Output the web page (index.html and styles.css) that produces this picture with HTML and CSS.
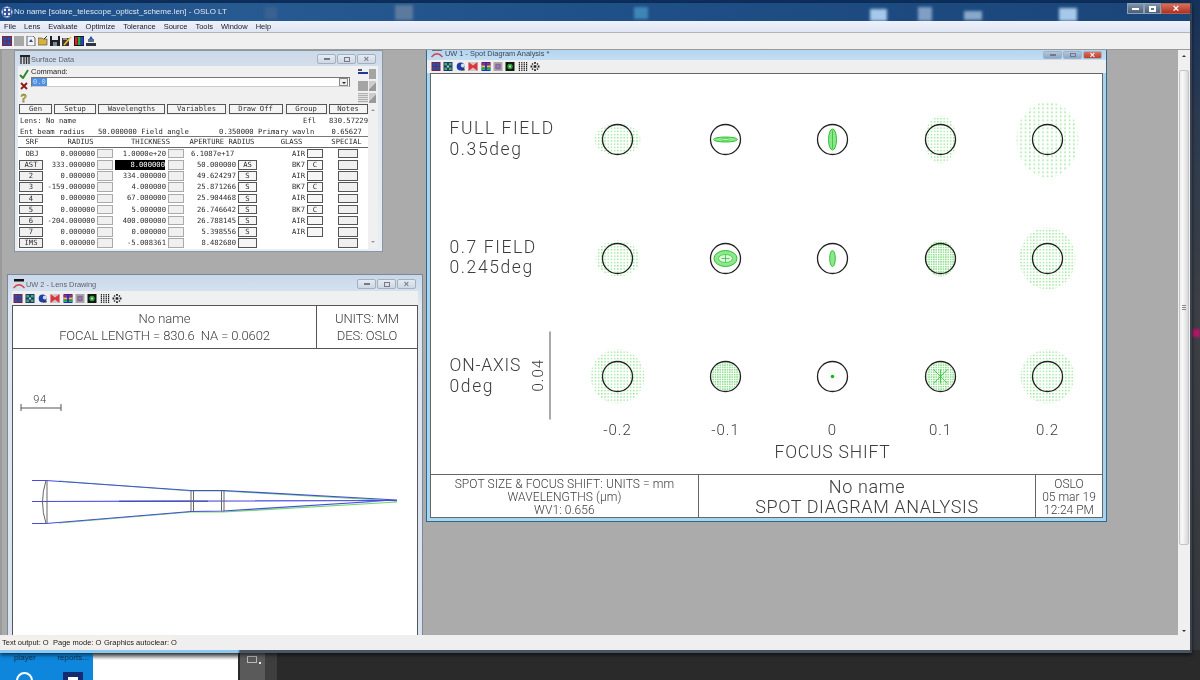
FILE: index.html
```html
<!DOCTYPE html>
<html lang="en">
<head>
<meta charset="utf-8">
<title>OSLO LT</title>
<link rel="stylesheet" href="styles.css">
</head>
<body>
<svg class="sheet" aria-hidden="true">
  <defs>
    <pattern id="dotsA" width="3.2" height="3.2" patternUnits="userSpaceOnUse"><rect width="1.4" height="1.4" fill="#98e898"/></pattern>
    <pattern id="dotsD" width="4.4" height="4" patternUnits="userSpaceOnUse"><rect width="1.6" height="1.6" fill="#a0e8a0"/></pattern>
    <pattern id="dotsB" width="2.4" height="2.4" patternUnits="userSpaceOnUse"><rect width="1.5" height="1.5" fill="#88e088"/></pattern>
    <symbol id="i1" viewBox="0 0 10 10"><rect width="10" height="10" fill="#8c1c34"/><rect x="1" y="1" width="3.6" height="3.6" fill="#2050b0"/><rect x="5.4" y="1" width="3.6" height="3.6" fill="#2050b0"/><rect x="1" y="5.4" width="3.6" height="3.6" fill="#2050b0"/><rect x="5.4" y="5.4" width="3.6" height="3.6" fill="#2050b0"/></symbol>
    <symbol id="i2" viewBox="0 0 10 10"><rect width="10" height="10" fill="#203870"/><path d="M1 1h3v3H1zM6 1h3v3H6zM1 6h3v3H1zM6 6h3v3H6z" fill="#40b060"/><rect x="4" y="4" width="2" height="2" fill="#e0e0e0"/></symbol>
    <symbol id="i3" viewBox="0 0 10 10"><circle cx="4.6" cy="5" r="4.4" fill="#1c3fa8"/><circle cx="7" cy="4" r="2.2" fill="#d8dce8"/><path d="M5 8.5l4-1v2H5z" fill="#333"/></symbol>
    <symbol id="i4" viewBox="0 0 10 10"><rect width="10" height="10" fill="#c8c8cc"/><path d="M0 0l5 4 5-4v10L5 6l-5 4z" fill="#e0343c"/></symbol>
    <symbol id="i5" viewBox="0 0 10 10"><rect width="10" height="10" fill="#2030d0"/><path d="M0 1h4v2H0zM6 1h4v2H6z" fill="#e02020"/><path d="M0 4h4v2H0zM6 4h4v2H6z" fill="#e8d020"/><path d="M0 7h4v2H0zM6 7h4v2H6z" fill="#20c040"/></symbol>
    <symbol id="i6" viewBox="0 0 10 10"><rect width="10" height="10" fill="#a8a8a8"/><rect x="2" y="2" width="6" height="6" fill="#a05c90"/><rect x="3.5" y="3.5" width="3" height="3" fill="#6890c0"/></symbol>
    <symbol id="i7" viewBox="0 0 10 10"><rect width="10" height="10" fill="#101810"/><circle cx="5" cy="5" r="3" fill="#30a040"/><circle cx="5" cy="5" r="1.2" fill="#c0f0a0"/></symbol>
    <symbol id="i8" viewBox="0 0 10 10"><path d="M1 0v10M3.7 0v10M6.4 0v10M9 0v10" stroke="#222" stroke-width="1.3" stroke-dasharray="1.6 .5" fill="none"/></symbol>
    <symbol id="i9" viewBox="0 0 10 10"><path d="M4 0h2v2H4zM0 4h2v2H0zM8 4h2v2H8zM4 8h2v2H4zM1.500 1.500h1.500v1.500h-1.500zM7 1.500h1.500v1.500H7zM1.500 7h1.500v1.500h-1.500zM7 7h1.500v1.500H7zM3.500 3.500h3v3h-3z" fill="#222"/></symbol>
    <symbol id="lensico" viewBox="0 0 12 10"><rect x="1" y="0" width="10" height="2.500" fill="#111"/><path d="M.5 9Q6 2.500 11.500 9" stroke="#d84040" stroke-width="1.300" fill="none"/></symbol>
  </defs>
</svg>

<div class="top-strip"></div>
<div class="side-strip"><span class="side-mark"></span></div>

<div class="desktop">
  <div class="shortcuts">
    <div class="short-labels"><span>player</span><span>reports...</span></div>
    <div class="short-icons"><span class="round-ico"></span><span class="square-ico"></span></div>
  </div>
  <div class="blank"></div>
  <div class="darkapp">
    <div class="panel-a"><span class="panel-ico"></span><span class="panel-dot"></span></div>
    <div class="panel-b"></div>
  </div>
</div>

<main class="app">
  <header class="titlebar">
    <svg class="app-ico" viewBox="0 0 12 12"><circle cx="6" cy="6" r="5.500" fill="#e8eef8"/><circle cx="4" cy="4" r="2" fill="none" stroke="#1c3c90" stroke-width="1.200"/><circle cx="8" cy="4" r="2" fill="none" stroke="#1c3c90" stroke-width="1.200"/><circle cx="4" cy="8" r="2" fill="none" stroke="#1c3c90" stroke-width="1.200"/><circle cx="8" cy="8" r="2" fill="none" stroke="#1c3c90" stroke-width="1.200"/></svg>
    <span class="app-title">No name [solare_telescope_opticst_scheme.len] - OSLO LT</span>
    <div class="app-btns">
      <span class="abtn"><i class="glyph-min"></i></span>
      <span class="abtn"><i class="glyph-max"></i></span>
      <span class="abtn close"><i class="glyph-x">×</i></span>
    </div>
  </header>
  <nav class="menubar"><span>File</span><span>Lens</span><span>Evaluate</span><span>Optimize</span><span>Tolerance</span><span>Source</span><span>Tools</span><span>Window</span><span>Help</span></nav>
  <div class="toolbar">
    <svg class="tico"><use href="#i1"/></svg>
    <span class="tico grey"></span>
    <svg class="tico" viewBox="0 0 10 10"><path d="M1 0h6l2 2v8H1z" fill="#f4f4f4" stroke="#445" stroke-width=".8"/><path d="M3 6l2-3 2 3z" fill="#2050b0"/></svg>
    <svg class="tico" viewBox="0 0 10 10"><path d="M0 2h4l1 1h4v6H0z" fill="#d8b040" stroke="#554" stroke-width=".7"/><path d="M6 3l3-3" stroke="#333"/></svg>
    <svg class="tico" viewBox="0 0 10 10"><rect width="10" height="10" fill="#1c2028"/><rect x="2" y="0" width="6" height="4" fill="#e8e8e8"/><rect x="3" y="6" width="4" height="4" fill="#808890"/></svg>
    <svg class="tico" viewBox="0 0 10 10"><rect y="2" width="7" height="8" fill="#403830"/><path d="M2 9l7-8" stroke="#e8c040" stroke-width="1.600"/><path d="M1 3h4" stroke="#e8e8e8"/></svg>
    <svg class="tico" viewBox="0 0 10 10"><rect width="10" height="10" fill="#181818"/><rect x="1" y="1" width="2.500" height="8" fill="#e02030"/><rect x="4" y="1" width="2.500" height="8" fill="#20b040"/><rect x="7" y="1" width="2.500" height="8" fill="#2040d0"/></svg>
    <svg class="tico" viewBox="0 0 10 10"><path d="M3 3l2-3 2 3z" fill="#2050b0"/><rect x="2" y="3" width="6" height="3" fill="#60708c"/><rect y="7" width="10" height="3" fill="#2c3444"/></svg>
  </div>

  <div class="workspace">
    <div class="mdi">

      <!-- Surface Data -->
      <section class="win surface">
        <div class="win-title">
          <svg class="w-ico" viewBox="0 0 10 9"><rect width="10" height="2" fill="#222"/><path d="M1 2v7M4 2v7M6.500 2v7M9 2v7" stroke="#333" stroke-width="1.400"/></svg>
          <span class="win-name">Surface Data</span>
          <div class="wbtns"><span class="wbtn"><i class="g-min"></i></span><span class="wbtn"><i class="g-max"></i></span><span class="wbtn"><i class="g-x">×</i></span></div>
        </div>
        <div class="cmd">
          <div class="cmd-marks">
            <svg viewBox="0 0 10 10"><path d="M1 6l3 3 5-8" stroke="#2c8a2c" stroke-width="2" fill="none"/></svg>
            <svg viewBox="0 0 10 10"><path d="M2 2l6 6M8 2l-6 6" stroke="#8a1818" stroke-width="1.800" fill="none"/></svg>
            <span class="q">?</span>
          </div>
          <div class="cmd-main">
            <label class="cmd-label">Command:</label>
            <div class="combo"><span class="combo-sel">0.0</span><span class="combo-arrow"></span></div>
          </div>
          <div class="cmd-tools">
            <svg viewBox="0 0 10 10"><rect y="2" width="10" height="6" fill="#eef"/><path d="M0 4h10" stroke="#1c3c90" stroke-width="2"/><path d="M0 1h4" stroke="#222" stroke-width="1.500"/></svg><span class="tb-g"></span>
            <span class="tb-g"></span><span class="tb-p"></span>
            <span class="tb-l"></span><span class="tb-p"></span>
          </div>
        </div>
        <div class="sd-body">
          <div class="sd-main">
            <div class="cmdbtns">
              <button class="cb gen">Gen</button><button class="cb setup">Setup</button><button class="cb wave">Wavelengths</button><button class="cb vars">Variables</button><button class="cb draw">Draw Off</button><button class="cb group">Group</button><button class="cb notes">Notes</button>
            </div>
            <div class="info"><span>Lens: No name</span><span class="efl">Efl   830.57229</span></div>
            <div class="info rule">Ent beam radius   50.000000 Field angle       0.350000 Primary wavln    0.65627</div>
            <div class="sheet-grid heads">
              <span class="c">SRF</span><span class="c s2">RADIUS</span><span class="c s2">THICKNESS</span><span class="c s2">APERTURE RADIUS</span><span class="c s2">GLASS</span><span class="c">SPECIAL</span>
            </div>
            <div class="sheet-grid">
              <span class="c">OBJ</span><span class="n">0.000000</span><i class="b"></i><span class="n">1.0000e+20</span><i class="b"></i><span class="n l">6.1087e+17</span><span></span><span class="n">AIR</span><i class="b on"></i><i class="sp"></i>
              <i class="srf">AST</i><span class="n">333.000000</span><i class="b"></i><span class="n sel">8.000000</span><i class="b"></i><span class="n">50.000000</span><i class="b on w">AS</i><span class="n">BK7</span><i class="b on">C</i><i class="sp"></i>
              <i class="srf">2</i><span class="n">0.000000</span><i class="b"></i><span class="n">334.000000</span><i class="b"></i><span class="n">49.624297</span><i class="b on w">S</i><span class="n">AIR</span><i class="b on"></i><i class="sp"></i>
              <i class="srf">3</i><span class="n">-159.000000</span><i class="b"></i><span class="n">4.000000</span><i class="b"></i><span class="n">25.871266</span><i class="b on w">S</i><span class="n">BK7</span><i class="b on">C</i><i class="sp"></i>
              <i class="srf">4</i><span class="n">0.000000</span><i class="b"></i><span class="n">67.000000</span><i class="b"></i><span class="n">25.904468</span><i class="b on w">S</i><span class="n">AIR</span><i class="b on"></i><i class="sp"></i>
              <i class="srf">5</i><span class="n">0.000000</span><i class="b"></i><span class="n">5.000000</span><i class="b"></i><span class="n">26.746642</span><i class="b on w">S</i><span class="n">BK7</span><i class="b on">C</i><i class="sp"></i>
              <i class="srf">6</i><span class="n">-204.000000</span><i class="b"></i><span class="n">400.000000</span><i class="b"></i><span class="n">26.788145</span><i class="b on w">S</i><span class="n">AIR</span><i class="b on"></i><i class="sp"></i>
              <i class="srf">7</i><span class="n">0.000000</span><i class="b"></i><span class="n">0.000000</span><i class="b"></i><span class="n">5.398556</span><i class="b on w">S</i><span class="n">AIR</span><i class="b on"></i><i class="sp"></i>
              <i class="srf">IMS</i><span class="n">0.000000</span><i class="b"></i><span class="n">-5.008361</span><i class="b"></i><span class="n">8.482680</span><i class="b on w"></i><span></span><span></span><i class="sp"></i>
            </div>
          </div>
          <div class="vscroll"><span class="up"></span><span class="down"></span></div>
        </div>
      </section>

      <!-- Lens Drawing -->
      <section class="win lens">
        <div class="win-title tall">
          <svg class="w-ico wide"><use href="#lensico"/></svg>
          <span class="win-name">UW 2 - Lens Drawing</span>
          <div class="wbtns"><span class="wbtn"><i class="g-min"></i></span><span class="wbtn"><i class="g-max"></i></span><span class="wbtn"><i class="g-x">×</i></span></div>
        </div>
        <div class="gtools">
          <svg class="gt"><use href="#i1"/></svg><svg class="gt"><use href="#i2"/></svg><svg class="gt"><use href="#i3"/></svg><svg class="gt"><use href="#i4"/></svg><svg class="gt"><use href="#i5"/></svg><svg class="gt"><use href="#i6"/></svg><svg class="gt"><use href="#i7"/></svg><svg class="gt"><use href="#i8"/></svg><svg class="gt"><use href="#i9"/></svg>
        </div>
        <div class="canvas lens-canvas">
          <div class="lens-head">
            <div class="lh-main"><div class="vt lh1">No name</div><div class="vt lh2">FOCAL LENGTH = 830.6&nbsp; NA = 0.0602</div></div>
            <div class="lh-side"><div class="vt lh2">UNITS: MM</div><div class="vt lh2">DES: OSLO</div></div>
          </div>
          <svg class="lens-plot" viewBox="0 0 405 287">
            <text x="27" y="54" class="ptx s10" text-anchor="middle">94</text>
            <path d="M8 55v7M48 55v7M8 59h40" class="ink"/>
            <path d="M46 132L178 142 210 142 384 152M46 174L178 163 210 163 384 153" class="ray-g"/>
            <path d="M19 131.500H33L178 141.500 210 141.500 384 151M19 174.500H33L178 162.500 210 162 384 151M19 152.500L384 151.500" class="ray-b"/>
            <path d="M106 152.200L195 152.200" class="ray-d"/>
            <path d="M33 131.500Q26 153 33 174.500M34 131.500V174.500M178 141.500V162.500M180.500 141.500V162.500M208.500 141.500V162.500M211 141.500V162.500" class="lens-ink"/>
          </svg>
        </div>
      </section>

      <!-- Spot Diagram -->
      <section class="win spot">
        <div class="win-title tall active">
          <svg class="w-ico wide"><use href="#lensico"/></svg>
          <span class="win-name">UW 1 - Spot Diagram Analysis *</span>
          <div class="wbtns"><span class="wbtn"><i class="g-min"></i></span><span class="wbtn"><i class="g-max"></i></span><span class="wbtn close"><i class="g-x">×</i></span></div>
        </div>
        <div class="gtools">
          <svg class="gt"><use href="#i1"/></svg><svg class="gt"><use href="#i2"/></svg><svg class="gt"><use href="#i3"/></svg><svg class="gt"><use href="#i4"/></svg><svg class="gt"><use href="#i5"/></svg><svg class="gt"><use href="#i6"/></svg><svg class="gt"><use href="#i7"/></svg><svg class="gt"><use href="#i8"/></svg><svg class="gt"><use href="#i9"/></svg>
        </div>
        <div class="canvas spot-canvas">
          <svg class="spot-plot" viewBox="431.500 74.500 670 399.500">
            <text x="450" y="134" class="ptx s17">FULL FIELD</text>
            <text x="450" y="155" class="ptx s17">0.35deg</text>
            <text x="450" y="253" class="ptx s17">0.7 FIELD</text>
            <text x="450" y="273" class="ptx s17">0.245deg</text>
            <text x="450" y="371" class="ptx s17 tight">ON-AXIS</text>
            <text x="450" y="392" class="ptx s17">0deg</text>
            <text class="ptx s15" transform="translate(543 392) rotate(-90)">0.04</text>
            <path d="M550.500 332V420" class="ink"/>

            <g class="spots-a">
              <ellipse cx="618" cy="140" rx="23" ry="16"/>
              <ellipse cx="941" cy="140" rx="16" ry="24"/>
              <ellipse cx="618" cy="259" rx="22" ry="18"/>
              <ellipse cx="1048" cy="259" rx="28" ry="31"/>
              <ellipse cx="618" cy="377" rx="27" ry="27"/>
              <ellipse cx="1048" cy="377" rx="27" ry="27"/>
            </g>
            <ellipse class="spots-d" cx="1048" cy="140" rx="31" ry="38"/>
            <g class="spots-b">
              <ellipse cx="941" cy="259" rx="15" ry="18"/>
              <ellipse cx="941" cy="377" rx="14" ry="14"/>
              <ellipse cx="726" cy="377" rx="14" ry="14"/>
            </g>
            <g class="spots-c">
              <ellipse cx="726" cy="140" rx="12" ry="2.500"/>
              <ellipse cx="833" cy="140" rx="4" ry="10.500"/>
              <ellipse cx="726" cy="259" rx="11.500" ry="8"/>
              <ellipse cx="833" cy="259" rx="2.800" ry="8"/>
              <ellipse class="solid" cx="833" cy="377" rx="1.800" ry="1.800"/>
            </g>
            <ellipse class="hole" cx="726" cy="259" rx="7" ry="4"/>
            <ellipse class="hole" cx="726" cy="140" rx="4" ry="1"/>
            <path d="M726 255v8M722 259h8M833 131v18M941 370v14M934 370l14 14M948 370l-14 14" class="ring-g"/>
            <g class="rings">
              <circle cx="618" cy="140" r="15"/><circle cx="726" cy="140" r="15"/><circle cx="833" cy="140" r="15"/><circle cx="941" cy="140" r="15"/><circle cx="1048" cy="140" r="15"/>
              <circle cx="618" cy="259" r="15"/><circle cx="726" cy="259" r="15"/><circle cx="833" cy="259" r="15"/><circle cx="941" cy="259" r="15"/><circle cx="1048" cy="259" r="15"/>
              <circle cx="618" cy="377" r="15"/><circle cx="726" cy="377" r="15"/><circle cx="833" cy="377" r="15"/><circle cx="941" cy="377" r="15"/><circle cx="1048" cy="377" r="15"/>
            </g>
            <g text-anchor="middle">
              <text x="618" y="435" class="ptx s15">-0.2</text>
              <text x="726" y="435" class="ptx s15">-0.1</text>
              <text x="833" y="435" class="ptx s15">0</text>
              <text x="941" y="435" class="ptx s15">0.1</text>
              <text x="1048" y="435" class="ptx s15">0.2</text>
              <text x="833" y="458" class="ptx s17 tight">FOCUS SHIFT</text>
            </g>
          </svg>
          <div class="spot-foot">
            <div class="sf sf1"><div class="vt">SPOT SIZE &amp; FOCUS SHIFT: UNITS = mm</div><div class="vt">WAVELENGTHS (µm)</div><div class="vt">WV1: 0.656</div></div>
            <div class="sf sf2"><div class="vt big">No name</div><div class="vt big">SPOT DIAGRAM ANALYSIS</div></div>
            <div class="sf sf3"><div class="vt">OSLO</div><div class="vt">05 mar 19</div><div class="vt">12:24 PM</div></div>
          </div>
        </div>
      </section>
    </div>
    <div class="mdi-scroll"><span class="up"></span><span class="thumb"><i></i></span><span class="down"></span></div>
  </div>

  <footer class="status">
    <span class="pane p1">Text output: O</span><span class="pane p2">Page mode: O</span><span class="pane p3">Graphics autoclear: O</span>
  </footer>
  <div class="app-edge"></div>
</main>
</body>
</html>
```

FILE: styles.css
```css
*{box-sizing:border-box}
html,body{margin:0;padding:0}
body{width:1200px;height:680px;overflow:hidden;position:relative;background:#2a2a2a;font-family:"Liberation Sans",sans-serif}
.sheet{width:0;height:0;position:absolute}

.top-strip{position:absolute;left:0;top:0;width:1200px;height:4px;background:#0d2f5c}
.side-strip{position:absolute;left:1192px;top:0;width:8px;height:680px;background:linear-gradient(#15325a 0,#2d3b50 120px,#3c3f44 300px,#34373c 100%)}
.side-mark{position:absolute;left:0;top:329px;width:8px;height:8px;background:#b01868;filter:blur(1px)}

.desktop{position:absolute;left:0;top:650px;width:1200px;height:30px;display:flex}
.shortcuts{width:93px;background:#0e86dc;color:#14304e;font-size:8px;padding-top:3px}
.short-labels{display:flex;justify-content:space-between;padding:0 4px 0 14px}
.short-icons{display:flex;gap:30px;padding:10px 0 0 16px}
.round-ico{width:17px;height:17px;border-radius:50%;border:2px solid #fff}
.square-ico{width:20px;height:20px;background:#152a70;border:5px solid #152a70;box-shadow:inset 0 0 0 8px #fff}
.blank{width:145px;background:linear-gradient(#555 0,#888 4px,#fff 10px)}
.darkapp{flex:1;display:flex;background:#2a2a2a;padding:3px 0 0 2px}
.panel-a{width:25px;background:#5a5a5a;position:relative}
.panel-ico{position:absolute;left:7px;top:3px;width:10px;height:7px;border:1px solid #b8b8b8}
.panel-dot{position:absolute;left:19px;top:9px;width:2px;height:2px;background:#eee}
.panel-b{width:12px;background:#3e3e3e}

.app{position:absolute;left:0;top:3px;width:1192px;height:650px;display:flex;flex-direction:column;border-right:2px solid #39424e;box-shadow:0 2px 4px rgba(0,0,0,.6);filter:blur(.3px)}
.titlebar{height:18px;flex:none;display:flex;align-items:center;padding-left:1px;position:relative;overflow:hidden;color:#e8eef6;background:linear-gradient(90deg,#1b4c86,#285a92 20%,#1f5088 50%,#1a4578 100%)}
.titlebar:before{content:"";position:absolute;inset:0;filter:blur(1.500px);
  background:
   linear-gradient(#a6c8ea,#a6c8ea) 870px 6px/17px 12px no-repeat,
   linear-gradient(#7f9fc4,#7f9fc4) 918px 4px/14px 14px no-repeat,
   linear-gradient(#8aa8cc,#8aa8cc) 964px 8px/18px 9px no-repeat,
   linear-gradient(#a6c8ea,#a6c8ea) 1059px 5px/18px 13px no-repeat,
   linear-gradient(#5c7a9e,#5c7a9e) 395px 2px/18px 15px no-repeat,
   linear-gradient(#3f86b8,#3f86b8) 634px 4px/14px 12px no-repeat,
   linear-gradient(#3a6290,#3a6290) 265px 4px/12px 12px no-repeat}
.app-ico{width:12px;height:12px;flex:none;position:relative}
.app-title{font-size:8px;margin-left:1px;color:#dfe6f0;white-space:nowrap;line-height:1;position:relative}
.app-btns{position:absolute;left:1127px;top:0;display:flex;height:11px}
.abtn{width:17px;height:11px;background:linear-gradient(#7f93aa,#4a5f78);border:1px solid #8ea0b4;display:flex;align-items:center;justify-content:center}
.abtn.close{width:30px;background:linear-gradient(#d8705e,#b03020);border-color:#b06050}
.glyph-min{width:7px;height:2px;background:#fff}
.glyph-max{width:7px;height:6px;border:2px solid #fff}
.glyph-x{color:#fff;font:bold 11px/9px "Liberation Sans",sans-serif}

.menubar{height:12px;flex:none;background:linear-gradient(#eef2fa,#dfe5f3);border-bottom:1px solid #b4b4b8;display:flex;gap:8px;padding-left:4px;align-items:center;font-size:7.500px;color:#1a1a2a;white-space:nowrap}
.toolbar{height:17px;flex:none;background:#f0f0f0;border-bottom:1px solid #9a9a9a;display:flex;align-items:center;gap:2px;padding-left:2px}
.tico{width:10px;height:10px;flex:none}
.tico.grey{background:#a8a8a8}

.workspace{flex:1;display:flex;min-height:0}
.mdi{flex:1;position:relative;overflow:hidden;background:#ababab;border-left:2px solid #9a9a9a}
.mdi-scroll{width:12px;flex:none;background:#f0f0f0;display:flex;flex-direction:column;align-items:center;position:relative}
.mdi-scroll .up{height:20px;flex:none;width:0;position:relative}
.mdi-scroll .up:before{content:"";position:absolute;left:-2px;top:5px;border:2px solid transparent;border-bottom-color:#333;border-top:0}
.mdi-scroll .down{position:absolute;left:4px;bottom:3px;border:2px solid transparent;border-top-color:#333;border-bottom:0}
.thumb{width:10px;height:475px;background:linear-gradient(90deg,#eee,#f8f8f8 30%,#d8d8d8);border:1px solid #c4c4c4;border-radius:2px;display:flex;align-items:center;justify-content:center}
.thumb i{width:4px;height:5px;background:repeating-linear-gradient(#888 0 1px,transparent 1px 2px)}

.status{height:15px;flex:none;background:#efefef;display:flex;gap:2px;padding:2px 0 0 1px;font-size:7.500px;color:#1a1a1a;white-space:nowrap}
.pane{background:#f4f0ec;padding-left:1px;height:11px;line-height:11px}
.p1{width:49px}.p2{width:49px}.p3{width:72px}
.app-edge{height:3px;flex:none;background:linear-gradient(90deg,#8cc8f0 0,#8cc8f0 238px,#4a5666 240px,#4a5666 100%)}

.win{position:absolute;display:flex;flex-direction:column;background:#e4ecf4;border:1px solid #7c8894}
.surface{left:12px;top:0;width:369px;height:202px;padding:0 4px 3px 3px;border-color:#8b96a0;background:linear-gradient(#ccd9e8,#dde6f0 40px,#e8eef4)}
.lens{left:5px;top:224px;width:416px;height:380px;padding:0 4px;background:linear-gradient(#c8d8ea,#e0e8f2 30px,#d8e2ee)}
.spot{left:424px;top:-7px;width:681px;height:479px;padding:0 3px 3px;background:#a8d4f0;border-color:#2e6a86}
.win-title{height:15px;flex:none;display:flex;align-items:center;font-size:7.400px;color:#5a6470;position:relative;padding:1px 0 0 2px;gap:1px}
.win-title.tall{height:16px;padding:2px 0 0 1px}
.win-title.active{background:linear-gradient(#a8d0ee,#c4def2);margin:0 -3px;padding:2px 0 0 4px;color:#384858;gap:2px}
.w-ico{width:10px;height:9px;flex:none}
.w-ico.wide{width:12px;height:10px}
.win-name{white-space:nowrap}
.wbtns{position:absolute;right:2px;top:3px;display:flex;gap:1px}
.lens .wbtns{top:4px}
.spot .wbtns{right:4px;top:7px;height:8px}
.wbtn{width:19px;height:10px;background:linear-gradient(#e4ebf2,#cdd8e4);border:1px solid #a4b0bc;border-radius:2px;display:flex;align-items:center;justify-content:center}
.spot .wbtn{height:8px;background:linear-gradient(#b0c8e0,#8aa8c8)}
.spot .wbtn.close{background:linear-gradient(#d87060,#c04030)}
.spot .wbtn .g-x{color:#fff;line-height:6px}
.spot .g-max{height:4px}
.g-min{width:6px;height:2px;border:1px solid #778;background:#eee}
.g-max{width:6px;height:5px;border:1px solid #778}
.g-x{font:bold 9px/8px "Liberation Sans",sans-serif;color:#778;font-style:normal}

.cmd{height:38px;flex:none;display:flex;background:#f0f0f0}
.cmd-marks{width:11px;margin-right:2px;flex:none;display:flex;flex-direction:column;align-items:center;padding-top:3px;gap:2px}
.cmd-marks svg{width:10px;height:10px}
.q{font:bold 11px/10px "Liberation Sans",sans-serif;color:#c8b820;-webkit-text-stroke:.3px #443}
.cmd-main{width:319px;flex:none}
.cmd-label{display:block;font-size:7.500px;height:11px;line-height:12px;color:#222}
.combo{height:10px;background:#fff;border:1px solid #777;border-bottom-color:#ccc;display:flex;justify-content:space-between;align-items:stretch}
.combo-sel{background:#4f8fe0;color:#cfe0f8;font:7px/8px "Liberation Mono",monospace;padding:0 1px}
.combo-arrow{width:9px;background:#eee;border:1px solid #888;position:relative;margin-right:1px}
.combo-arrow:after{content:"";position:absolute;left:2px;top:3px;border:2px solid transparent;border-top-color:#222;border-bottom:0}
.cmd-tools{margin-left:8px;display:grid;grid-template-columns:10px 7px;grid-auto-rows:10px;gap:2px 1px;padding-top:3px;width:20px}
.cmd-tools svg{width:10px;height:10px}
.tb-g{background:#a4a4a4}
.tb-p{background:linear-gradient(135deg,#ccc 50%,#9a9a9a 50%)}
.tb-l{background:repeating-linear-gradient(#b0b0b0 0 1px,#e0e0e0 1px 2px)}

.sd-body{flex:1;display:flex;background:#fff;min-height:0}
.sd-main{width:350px;flex:none;font:7.200px/11px "DejaVu Sans Mono","Liberation Mono",monospace;color:#2c2c2c}
.cmdbtns{display:flex;height:11px;padding-left:1px;background:#f0f0f0}
.cb{height:10px;padding:0;margin:0 2px 0 0;flex:none;background:#f4f4f4;border:1px solid #555;border-bottom-width:1.500px;font:7.200px/8px "DejaVu Sans Mono",monospace;color:#333}
.gen{width:33px}.setup{width:42px}.wave{width:67px}.vars{width:59px;margin-right:2.500px}.draw{width:54px;margin-right:3px}.group{width:41px}.notes{width:39px}
.info{height:11px;line-height:11px;padding-left:2px;display:flex;justify-content:space-between;white-space:pre;width:350px}
.info.rule{display:block;border-bottom:1px solid #777}
.efl{white-space:pre}
.sheet-grid{display:grid;grid-template-columns:28px 49px 20px 51px 20px 50px 22px 47px 20px 43px;grid-auto-rows:11.200px;align-items:center;background:#fff}
.sheet-grid .c{text-align:center}
.s2{grid-column:span 2}
.heads{border-bottom:1.500px solid #666;grid-auto-rows:8.500px;line-height:10px;padding-top:.4px;height:11px}
.n{text-align:right;white-space:nowrap;line-height:10px}
.n.l{text-align:left;padding-left:5px;width:60px}
.n.sel{background:#000;color:#fff;margin-right:1px}
.b,.srf,.sp{display:block;height:9.500px;font-style:normal;text-align:center;line-height:8px;background:#f0f0f0}
.b{width:16px;margin-left:2px;border:1px solid #aaa}
.b.on{border-color:#555;background:#f6f6f6}
.b.w{width:19px}
.srf{width:24px;margin-left:1px;border:1px solid #555;border-bottom-width:1.500px}
.sp{width:20px;margin-left:13px;border:1px solid #555}

.vscroll{flex:1;background:#f0f0f0;position:relative}
.vscroll .up{position:absolute;left:3px;top:5px;border:2px solid transparent;border-bottom-color:#999;border-top:0}
.vscroll .down{position:absolute;left:3px;bottom:5px;border:2px solid transparent;border-top-color:#999;border-bottom:0}

.gtools{height:14px;flex:none;background:#eef0f2;display:flex;align-items:center;gap:2.400px;padding-left:1px}
.spot .gtools{height:13px;margin:0 -3px;padding-left:4px;background:#efefef}
.gt{width:10px;height:9px;flex:none}
.canvas{background:#fff;border:1px solid #555;flex:1;min-height:0;display:flex;flex-direction:column;color:#4a4a4a}
.spot-canvas{border-width:1.500px;border-color:#666}

.vt{font-family:Roboto,"Liberation Sans",sans-serif;font-weight:300;white-space:nowrap;line-height:1;color:#3c3c3c}
.lens-head{height:43px;flex:none;display:flex;border-bottom:1px solid #555}
.lh-main{width:304px;text-align:center;border-right:1px solid #555;display:flex;flex-direction:column;align-items:center;padding-top:6px;gap:4px}
.lh-side{flex:1;display:flex;flex-direction:column;align-items:center;padding-top:6px;gap:4px}
.lh1{font-size:13px}
.lh2{font-size:13px;letter-spacing:-.1px}
.lens-plot{width:405px;height:287px;flex:none;display:block}
.ptx{font-family:Roboto,"Liberation Sans",sans-serif;font-weight:300;fill:#3c3c3c}
.s10{font-size:11px;letter-spacing:.6px}
.s15{font-size:15px;letter-spacing:1px}
.s17{font-size:17.500px;letter-spacing:1.600px}
.s17.tight{letter-spacing:.8px}
.ink{fill:none;stroke:#555;stroke-width:1}
.ray-g{fill:none;stroke:#6ddc6d;stroke-width:1.200}
.ray-b{fill:none;stroke:#4a4ae0;stroke-width:1.100}
.ray-d{fill:none;stroke:#2a3aa0;stroke-width:.9}
.lens-ink{fill:none;stroke:#666;stroke-width:1}

.spot-plot{width:670px;height:399.500px;flex:none;display:block}
.spots-a ellipse{fill:url(#dotsA)}
.spots-d{fill:url(#dotsD)}
.spots-b ellipse{fill:url(#dotsB)}
.spots-c ellipse{fill:#8ee68e;stroke:#2cc42c;stroke-width:1}
.spots-c .solid{fill:#18b818;stroke:none}
.hole{fill:#dff8df;stroke:#3ccc3c;stroke-width:.8}
.ring-g{fill:none;stroke:#2fc02f;stroke-width:.8}
.rings circle{fill:none;stroke:#222;stroke-width:1.300}

.spot-foot{flex:1;display:grid;grid-template-columns:268px 337px 1fr;border-top:1.500px solid #666}
.sf{display:flex;flex-direction:column;align-items:center;border-right:1.500px solid #666;padding-top:3px}
.sf:last-child{border-right:0}
.sf .vt{height:13px;line-height:13px;font-size:12px}
.sf1 .vt{letter-spacing:.1px}
.sf2{padding-top:2px}
.sf2 .big{font-size:18px;height:20px;line-height:20px;letter-spacing:.6px}
```
